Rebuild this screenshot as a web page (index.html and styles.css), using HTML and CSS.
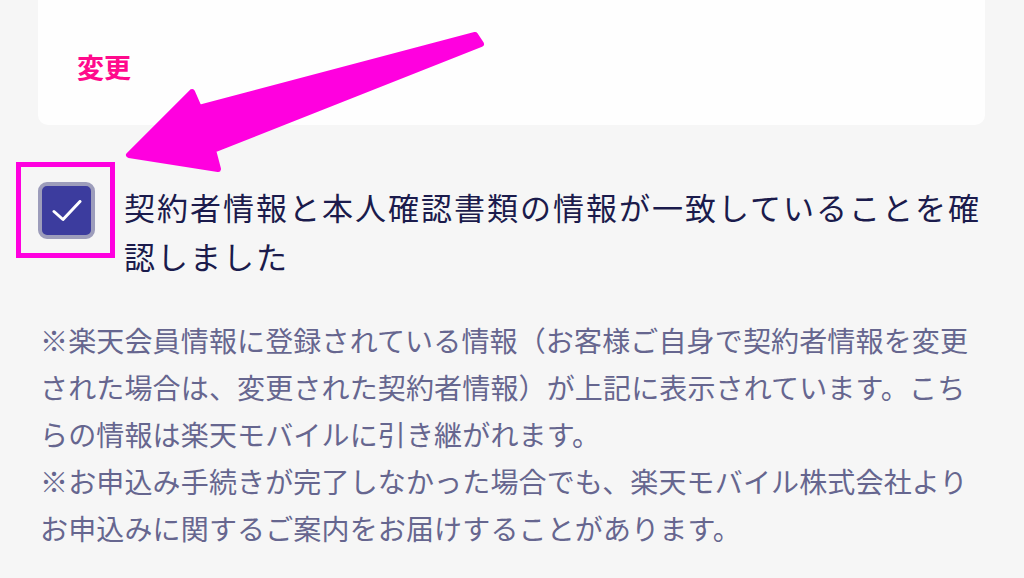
FILE: index.html
```html
<!DOCTYPE html>
<html lang="ja">
  <head>
    <meta charset="UTF-8" />
    <meta name="viewport" content="width=device-width, initial-scale=1.0" />
    <title>契約者情報の確認</title>
    <link rel="stylesheet" href="styles.css">
  </head>
  <body>
    <div class="page">
      <div class="card">
        <a class="change-link" href="#">変更</a>
      </div>

      <label class="agree">
        <span class="checkbox">
          <svg width="30" height="22" viewBox="0 0 30 22">
            <path d="M2 11.5 L11 19.5 L28 1.5" fill="none" stroke="#fff" stroke-width="3" stroke-linecap="round" stroke-linejoin="round" />
          </svg>
        </span>
        <span class="agree-text">契約者情報と本人確認書類の情報が一致していることを確認しました</span>
      </label>

      <p class="note">
        ※楽天会員情報に登録されている情報（お客様ご自身で契約者情報を変更<br />された場合は、変更された契約者情報）が上記に表示されています。こち<br />らの情報は楽天モバイルに引き継がれます。<br />
        ※お申込み手続きが完了しなかった場合でも、楽天モバイル株式会社より<br />お申込みに関するご案内をお届けすることがあります。
      </p>

      <!-- annotation overlay -->
      <div class="highlight"></div>
      <svg class="arrow" width="1024" height="578" viewBox="0 0 1024 578">
        <path d="M475,35 L199,108 L192,92 L129,155 L218,169 L213,150 L481,44 Z" fill="#ff00df" stroke="#ff00df" stroke-width="6" stroke-linejoin="round" />
      </svg>
    </div>
  </body>
</html>
```

FILE: styles.css
```css
body {
  margin: 0;
  padding: 0;
  background-color: #f6f6f6;
  font-family: "Noto Sans CJK JP", "Noto Sans", sans-serif;
}
.page {
  position: relative;
  width: 1024px;
  height: 578px;
  overflow: hidden;
}
.card {
  margin: 0 39px 0 38px;
  height: 125px;
  box-sizing: border-box;
  padding: 49px 0 0 39px;
  background-color: #fefefe;
  border-radius: 0 0 10px 10px;
}
.change-link {
  font-size: 27px;
  line-height: 36px;
  font-weight: bold;
  color: #ff0a8c;
  text-decoration: none;
}
.agree {
  display: flex;
  align-items: flex-start;
  gap: 29px;
  margin-top: 57px;
  padding: 0 36px 0 38px;
}
.checkbox {
  flex: none;
  width: 57px;
  height: 57px;
  box-sizing: border-box;
  border: 4px solid #9d9dbb;
  border-radius: 9px;
  background-color: #3c3c9e;
  display: flex;
  align-items: center;
  justify-content: center;
}
.agree-text {
  font-size: 31px;
  line-height: 49px;
  letter-spacing: 2px;
  color: #1b1b4c;
}
.note {
  margin: 37px 0 0;
  padding: 0 20px 0 40px;
  font-size: 28px;
  line-height: 47px;
  letter-spacing: 0.15px;
  color: #66668f;
  white-space: nowrap;
}
.highlight {
  position: absolute;
  left: 16px;
  top: 162px;
  width: 99px;
  height: 96px;
  box-sizing: border-box;
  border: 5px solid #ff00df;
}
.arrow {
  position: absolute;
  left: 0;
  top: 0;
  pointer-events: none;
}
```
